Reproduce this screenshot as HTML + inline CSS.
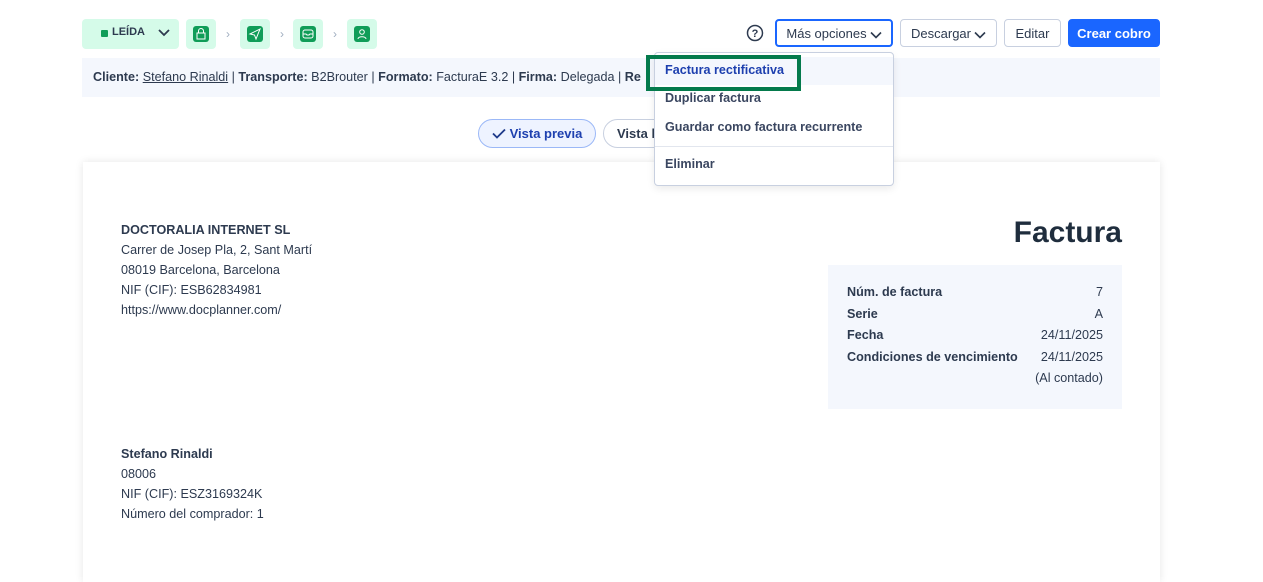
<!DOCTYPE html><html><head><meta charset="utf-8"><style>
body{margin:0;width:1263px;height:561px;overflow:hidden;background:#fff;font-family:"Liberation Sans",sans-serif;color:#1f2d3d;position:relative}
.a{position:absolute}
.ic{position:absolute;top:19px;width:30px;height:30px;background:#d5fbe9;border-radius:4px}
.ic i{position:absolute;left:7px;top:7px;width:16px;height:16px;background:#0f9d58;border-radius:3px}
.ic svg{position:absolute;left:7px;top:7px}
.chev{position:absolute;top:27px;color:#a0aec0;font-size:12px}
.btn{position:absolute;top:19px;height:28px;border:1px solid #c8d0e0;border-radius:4px;font-size:13px;line-height:28px;text-align:center;color:#2d3a4f;box-sizing:border-box;font-weight:bold}
.btn svg{vertical-align:middle;margin-left:3px}
.t{font-size:12.6px;line-height:20px;color:#2d3a4f}
.m{position:absolute;left:10px;font-size:12.6px;font-weight:bold;color:#3a4660}
</style></head><body>
<div class="a" style="left:82px;top:19px;width:97px;height:30px;background:#d5fbe9;border-radius:4px"></div>
<div class="a" style="left:101px;top:30px;width:7px;height:7px;background:#0f9d58;border-radius:1px"></div>
<div class="a" style="left:112px;top:26px;font-size:11px;font-weight:bold;color:#2d3a4f">LEÍDA</div>
<svg class="a" style="left:158px;top:28px" width="12" height="10"><path d="M1 2l5 5 5-5" stroke="#2d3a4f" stroke-width="1.8" fill="none"/></svg>
<div class="ic" style="left:186px"><i></i><svg width="16" height="16"><rect x="4" y="7" width="8" height="6" fill="none" stroke="#fff"/><path d="M5.5 7V5a2.5 2.5 0 015 0v2" fill="none" stroke="#fff"/></svg></div>
<span class="chev" style="left:226px">›</span>
<div class="ic" style="left:240px"><i></i><svg width="16" height="16"><path d="M3 8l10-5-4 10-1.5-4z" fill="none" stroke="#fff"/></svg></div>
<span class="chev" style="left:280px">›</span>
<div class="ic" style="left:293px"><i></i><svg width="16" height="16"><rect x="3" y="4" width="10" height="8" rx="2" fill="none" stroke="#fff"/><path d="M3 8h3l1 1h2l1-1h3" fill="none" stroke="#fff"/></svg></div>
<span class="chev" style="left:333px">›</span>
<div class="ic" style="left:347px"><i></i><svg width="16" height="16"><circle cx="8" cy="6" r="2.3" fill="none" stroke="#fff"/><path d="M4 13c0-3 8-3 8 0" fill="none" stroke="#fff"/></svg></div>

<div class="a" style="left:82px;top:58px;width:1078px;height:39px;background:#f4f7fd"></div>
<div class="a t" style="left:93px;top:67px;white-space:nowrap"><b>Cliente:</b> <u>Stefano Rinaldi</u> | <b>Transporte:</b> B2Brouter | <b>Formato:</b> FacturaE 3.2 | <b>Firma:</b> Delegada | <b>Re</b></div>

<svg class="a" style="left:746px;top:24px" width="18" height="18"><circle cx="9" cy="9" r="7.5" fill="none" stroke="#2d3a4f" stroke-width="1.5"/><text x="9" y="13" font-size="11" text-anchor="middle" fill="#2d3a4f" font-family="Liberation Sans" font-weight="bold">?</text></svg>
<div class="btn" style="left:775px;width:118px;border:2px solid #1a66ff;line-height:26px;font-weight:normal">Más opciones<svg width="12" height="8"><path d="M1 1.5l5 5 5-5" stroke="#2d3a4f" stroke-width="1.6" fill="none"/></svg></div>
<div class="btn" style="left:900px;width:97px;font-weight:normal">Descargar<svg width="12" height="8"><path d="M1 1.5l5 5 5-5" stroke="#2d3a4f" stroke-width="1.6" fill="none"/></svg></div>
<div class="btn" style="left:1004px;width:57px;font-weight:normal">Editar</div>
<div class="btn" style="left:1068px;width:92px;background:#1a66ff;border-color:#1a66ff;color:#fff">Crear cobro</div>

<div class="a" style="left:478px;top:119px;width:118px;height:29px;border:1px solid #9bb8f7;border-radius:15px;background:#eef3ff;box-sizing:border-box;font-size:13px;font-weight:bold;color:#1e40af;line-height:27px;text-align:center"><svg width="14" height="11" style="vertical-align:-1px;margin-right:4px"><path d="M1 5.5l4 4 8-8" stroke="#1e3a8a" stroke-width="1.8" fill="none"/></svg>Vista previa</div>
<div class="a" style="left:603px;top:119px;width:80px;height:29px;border:1px solid #c8d0e0;border-radius:15px;box-sizing:border-box;font-size:13px;font-weight:bold;color:#2d3a4f;line-height:27px;padding-left:13px">Vista l</div>

<div class="a" style="left:83px;top:162px;width:1077px;height:420px;background:#fff;box-shadow:0 0 8px rgba(0,0,0,.1)"></div>
<div class="a t" style="left:121px;top:220px"><b>DOCTORALIA INTERNET SL</b><br>Carrer de Josep Pla, 2, Sant Martí<br>08019 Barcelona, Barcelona<br>NIF (CIF): ESB62834981<br>https://www.docplanner.com/</div>
<div class="a" style="right:141px;top:216px;font-size:30px;font-weight:bold;color:#1f2d3d">Factura</div>
<div class="a" style="left:828px;top:265px;width:294px;height:144px;background:#f4f7fd"></div>
<div class="a t" style="left:847px;top:282px;line-height:21.5px"><b>Núm. de factura</b><br><b>Serie</b><br><b>Fecha</b><br><b>Condiciones de vencimiento</b></div>
<div class="a t" style="right:160px;top:282px;line-height:21.5px;text-align:right">7<br>A<br>24/11/2025<br>24/11/2025<br>(Al contado)</div>
<div class="a t" style="left:121px;top:444px"><b>Stefano Rinaldi</b><br>08006<br>NIF (CIF): ESZ3169324K<br>Número del comprador: 1</div>

<div class="a" style="left:654px;top:52px;width:238px;height:132px;background:#fff;border:1px solid #c8d0e0;border-radius:4px;box-shadow:0 3px 8px rgba(0,0,0,.08)">
<div class="a" style="left:0;top:4px;width:238px;height:28px;background:#f4f7fd"></div>
<div class="m" style="top:10px;color:#1e40af">Factura rectificativa</div>
<div class="m" style="top:38px">Duplicar factura</div>
<div class="m" style="top:67px">Guardar como factura recurrente</div>
<div class="a" style="left:0;top:93px;width:238px;height:1px;background:#e2e6ee"></div>
<div class="m" style="top:104px">Eliminar</div>
</div>
<div class="a" style="left:646px;top:55px;width:147px;height:28px;border:4px solid #047a4c"></div>
</body></html>
